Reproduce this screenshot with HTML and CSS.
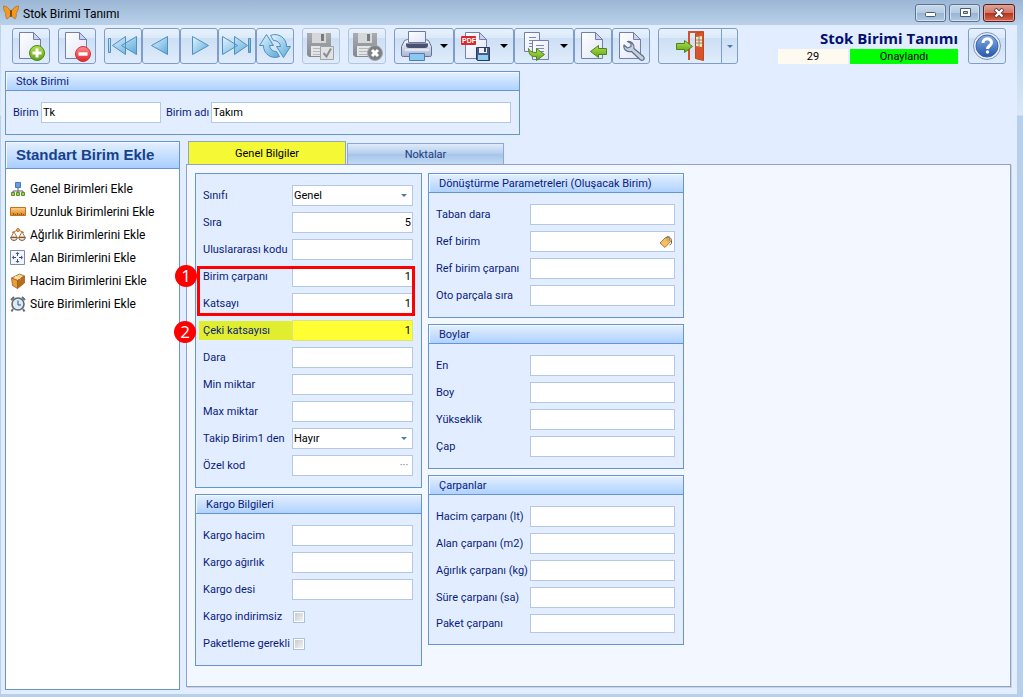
FILE: index.html
```
<!DOCTYPE html>
<html lang="tr">
<head>
    <meta charset="UTF-8">
    <meta name="viewport" content="width=device-width, initial-scale=1.0">
    <title>Stok Birimi Tanımı</title>
    <link rel="stylesheet" href="styles.css">
</head>
<body>

    <!-- Shared gradients and shapes for the icons -->
    <svg class="defs" width="0" height="0" aria-hidden="true">
        <defs>
            <linearGradient id="gBlue" x1="0" y1="0" x2="1" y2="1"><stop offset="0" stop-color="#e3f5fd"/><stop offset="1" stop-color="#5ba9db"/></linearGradient>
            <linearGradient id="gGreen" x1="0" y1="0" x2="0" y2="1"><stop offset="0" stop-color="#b5e04c"/><stop offset="1" stop-color="#5fa31c"/></linearGradient>
            <linearGradient id="gRed" x1="0" y1="0" x2="0" y2="1"><stop offset="0" stop-color="#ff8d8d"/><stop offset="1" stop-color="#e02228"/></linearGradient>
            <linearGradient id="gPage" x1="0" y1="0" x2="1" y2="1"><stop offset="0" stop-color="#ffffff"/><stop offset="1" stop-color="#dfe5f6"/></linearGradient>
            <linearGradient id="gGray" x1="0" y1="0" x2="0" y2="1"><stop offset="0" stop-color="#a9acb1"/><stop offset="1" stop-color="#85888d"/></linearGradient>
            <linearGradient id="gPrinter" x1="0" y1="0" x2="0" y2="1"><stop offset="0" stop-color="#f6f8fd"/><stop offset="1" stop-color="#a9b5d3"/></linearGradient>
            <linearGradient id="gHelp" x1="0" y1="0" x2="0" y2="1"><stop offset="0" stop-color="#86aee6"/><stop offset="1" stop-color="#2558ad"/></linearGradient>
            <linearGradient id="gOrange" x1="0" y1="0" x2="0" y2="1"><stop offset="0" stop-color="#fbd48c"/><stop offset="1" stop-color="#dc8318"/></linearGradient>
            <symbol id="page" viewBox="0 0 32 32">
                <path d="M4.500 2.500h14l7 7v19h-21z" fill="url(#gPage)" stroke="#747eaa"/>
                <path d="M18.500 2.500v7h7z" fill="#c9d2ee" stroke="#747eaa" stroke-linejoin="round"/>
            </symbol>
            <symbol id="floppy" viewBox="0 0 32 32">
                <path d="M2 3h24v24H4l-2-2z" fill="url(#gGray)"/>
                <path d="M7 3h14v10H7z" fill="#d5d7d9"/>
                <path d="M16 4h3v7h-3z" fill="#777a7e"/>
                <path d="M6 16h16v10H6z" fill="#e4e5e6"/>
                <path d="M8 18.500h12M8 21.500h12M8 24.500h12" stroke="#b6b8bb"/>
            </symbol>
        </defs>
    </svg>

    <div class="window">
        <header class="titlebar">
            <svg width="16" height="16" viewBox="0 0 16 16" aria-hidden="true">
                <path d="M8 8C7 4 4 1 .500 1c0 4 1 6 2.500 7-1 2 0 5 1 6 2-1 3.500-3 4-6z" fill="#f59a1c" stroke="#a8620f" stroke-width=".6"/>
                <path d="M8 8c1-4 4-7 7.500-7 0 4-1 6-2.500 7 1 2 0 5-1 6-2-1-3.500-3-4-6z" fill="#f59a1c" stroke="#a8620f" stroke-width=".6"/>
                <path d="M8 5v7" stroke="#4b2a0a" stroke-width="1.200"/>
            </svg>
            <span class="titlebar-text">Stok Birimi Tanımı</span>
            <div class="window-buttons">
                <button type="button" aria-label="Simge durumuna küçült">
                    <svg width="14" height="10" viewBox="0 0 14 10"><rect x="1.500" y="4.500" width="10" height="4" rx="1" fill="#fff" stroke="#4f5a68"/></svg>
                </button>
                <button type="button" aria-label="Ekranı kapla">
                    <svg width="14" height="10" viewBox="0 0 14 10"><path fill-rule="evenodd" d="M2.500.500h10v8h-10zM5.500 3.500v2h4v-2z" fill="#fff" stroke="#4f5a68"/></svg>
                </button>
                <button type="button" class="close" aria-label="Kapat">
                    <svg width="14" height="10" viewBox="0 0 14 10"><path d="M3 1l8 8M11 1L3 9" stroke="#5c3a3a" stroke-width="4"/><path d="M3.500 1.500l7 7M10.500 1.500l-7 7" stroke="#fff" stroke-width="2.400"/></svg>
                </button>
            </div>
        </header>

        <div class="form">
            <div class="toolbar">
                <button type="button" class="tool" aria-label="Yeni">
                    <svg width="32" height="32" viewBox="0 0 32 32"><use href="#page" width="32" height="32"/><circle cx="22" cy="23" r="7.500" fill="url(#gGreen)" stroke="#4c8518"/><path d="M22 18.500v9M17.500 23h9" stroke="#fff" stroke-width="3"/></svg>
                </button>
                <button type="button" class="tool" aria-label="Sil">
                    <svg width="32" height="32" viewBox="0 0 32 32"><use href="#page" width="32" height="32"/><circle cx="22" cy="24" r="7.500" fill="url(#gRed)" stroke="#d0343a"/><path d="M17.500 24h9" stroke="#fff" stroke-width="3.400"/></svg>
                </button>
                <div class="tool-group">
                    <button type="button" class="tool" aria-label="İlk kayıt">
                        <svg width="32" height="32" viewBox="0 0 32 32"><g fill="url(#gBlue)" stroke="#4f8fc0" stroke-linejoin="round"><path d="M1.500 8.500h2v14h-2zM18.500 6.500v18l-13-9zM29.500 6.500v18l-15-9z"/></g></svg>
                    </button>
                    <button type="button" class="tool" aria-label="Önceki kayıt">
                        <svg width="32" height="32" viewBox="0 0 32 32"><path d="M22.500 6.500v18l-16-9z" fill="url(#gBlue)" stroke="#4f8fc0" stroke-linejoin="round"/></svg>
                    </button>
                    <button type="button" class="tool" aria-label="Sonraki kayıt">
                        <svg width="32" height="32" viewBox="0 0 32 32"><path d="M9.500 6.500v18l16-9z" fill="url(#gBlue)" stroke="#4f8fc0" stroke-linejoin="round"/></svg>
                    </button>
                    <button type="button" class="tool" aria-label="Son kayıt">
                        <svg width="32" height="32" viewBox="0 0 32 32"><g fill="url(#gBlue)" stroke="#4f8fc0" stroke-linejoin="round"><path d="M13.500 6.500v18l13-9zM1.500 6.500v18l15-9zM27.500 8.500h2v14h-2z"/></g></svg>
                    </button>
                    <button type="button" class="tool" aria-label="Yenile">
                        <svg width="32" height="32" viewBox="0 0 32 32"><g fill="url(#gBlue)" stroke="#4f8fc0" stroke-linejoin="round"><path d="M4.500 15.500A11.500 11.500 0 0 0 20.500 26.500L17.500 21.500A6.500 6.500 0 0 1 10.500 15.500H14.500L7.500 4.500.500 15.500z"/><path d="M27.500 16.500A11.500 11.500 0 0 0 11.500 5.500L14.500 10.500A6.500 6.500 0 0 1 21.500 16.500H17.500L24.500 27.500 31.500 16.500z"/></g></svg>
                    </button>
                </div>
                <button type="button" class="tool" disabled aria-label="Kaydet">
                    <svg width="32" height="32" viewBox="0 0 32 32"><use href="#floppy" width="32" height="32"/><path d="M15.500 16.500h13v13h-13z" fill="#dfe1e3" stroke="#9fa2a6"/><path d="M18.500 23l3 3.500 4.500-8" fill="none" stroke="#8a8d91" stroke-width="2"/></svg>
                </button>
                <button type="button" class="tool" disabled aria-label="Kaydet ve kapat">
                    <svg width="32" height="32" viewBox="0 0 32 32"><use href="#floppy" width="32" height="32"/><circle cx="24" cy="23" r="7.500" fill="#7d8085" stroke="#a7aaad"/><path d="M21 20l6 6M27 20l-6 6" stroke="#fff" stroke-width="3"/></svg>
                </button>
                <div class="tool-group">
                    <button type="button" class="tool wide" aria-label="Yazdır">
                        <svg width="32" height="32" viewBox="0 0 32 32"><path d="M3.500 10.500l3-1h18l3 1 3 6v9q0 1-2 1h-26q-2 0-2-1v-9z" fill="url(#gPrinter)" stroke="#65709a"/><path d="M7.500 12.500V1.500h17v11z" fill="url(#gPage)" stroke="#6f79a3"/><path d="M5 13h22v2q0 3-3 3H8q-3 0-3-3z" fill="#4a5272"/><path d="M5 13.500h22" stroke="#8891b0"/><path d="M4 20h24" stroke="#fff"/><path d="M8.500 23.500h15v7h-15z" fill="#8cc9f2" stroke="#5b78ae"/></svg>
                        <span class="arrow"></span>
                    </button>
                    <button type="button" class="tool wide" aria-label="PDF kaydet">
                        <svg width="32" height="32" viewBox="0 0 32 32"><use href="#page" width="32" height="32"/><rect x="0" y="6" width="15" height="9" rx="1" fill="#d9292d"/><text x="1" y="13" class="pdf">PDF</text><path d="M15.500 17.500h13v13h-12l-1-1z" fill="#4a5a85" stroke="#2c3962"/><path d="M18 18h8v5h-8z" fill="#eef1fa"/><path d="M23 18h2v4h-2z" fill="#39486f"/><path d="M17 25h10v5H17z" fill="#8ecdf2"/></svg>
                        <span class="arrow"></span>
                    </button>
                    <button type="button" class="tool wide" aria-label="Kopyala">
                        <svg width="32" height="32" viewBox="0 0 32 32"><path d="M3.500 2.500h15v19h-15z" fill="url(#gPage)" stroke="#747eaa"/><path d="M8 7.500h7M8 10.500h5M8 13.500h4M8 16.500h3" stroke="#7d88b3"/><path d="M11.500 10.500h16v19h-16z" fill="url(#gPage)" stroke="#747eaa"/><path d="M15 15.500h8M15 18.500h8M20 21.500h3" stroke="#7d88b3"/><path d="M7.500 18.500c1 3 4 4 8 4v-4l8 6-8 6v-4c-5 1-8-2-8-8z" fill="url(#gGreen)" stroke="#4c8518"/></svg>
                        <span class="arrow"></span>
                    </button>
                    <button type="button" class="tool" aria-label="İçeri al">
                        <svg width="32" height="32" viewBox="0 0 32 32"><use href="#page" width="32" height="32"/><path d="M13.500 21.500l8-6v3h8v6h-8v3z" fill="url(#gGreen)" stroke="#4c8518"/></svg>
                    </button>
                    <button type="button" class="tool" aria-label="Ayarlar">
                        <svg width="32" height="32" viewBox="0 0 32 32"><use href="#page" width="32" height="32"/><path d="M12.500 11.500c3-1 7 2 6.500 7l9.500 8c2 3-1 5-3.500 3l-8.500-8c-4.500 1-8.500-2-7.500-6.500l3.500 3 3.500-1.500v-3z" fill="#c5cfdf" stroke="#5f6f8e" stroke-width="1.200" stroke-linejoin="round"/></svg>
                    </button>
                </div>
                <div class="tool-group">
                    <button type="button" class="tool exit" aria-label="Çıkış">
                        <svg width="32" height="32" viewBox="0 0 32 32"><path d="M15 30V2h14" fill="none" stroke="#d5512a" stroke-width="2"/><path d="M21.500 3.500l8-2v29l-8-2z" fill="#d9532b" stroke="#b84a22"/><path d="M22 7l6-1v11l-6-1z" fill="#f5e6bd"/><path d="M25 6v11M22 10h6M22 13h6" stroke="#7e7256" stroke-width=".8"/><path d="M2.500 13.500h8v-3l8 6-8 6v-3h-8z" fill="url(#gGreen)" stroke="#4c8518"/></svg>
                    </button>
                    <button type="button" class="tool narrow" aria-label="Çıkış seçenekleri"><span class="arrow small"></span></button>
                </div>
                <div class="record">
                    <h1>Stok Birimi Tanımı</h1>
                    <div class="record-status">
                        <span class="record-no">29</span>
                        <span class="record-state">Onaylandı</span>
                    </div>
                </div>
                <button type="button" class="tool" aria-label="Yardım">
                    <svg width="32" height="32" viewBox="0 0 32 32"><circle cx="16" cy="16" r="13.500" fill="#e9eef8" stroke="#7f95be"/><circle cx="16" cy="16" r="11" fill="url(#gHelp)" stroke="#3b65ab"/><path d="M12 13c0-5.500 8.500-5.500 8.500-.500 0 3-4 3.500-4 6.500" fill="none" stroke="#fff" stroke-width="3"/><circle cx="16.500" cy="22" r="1.700" fill="#fff"/></svg>
                </button>
            </div>

            <section class="group unit">
                <h2>Stok Birimi</h2>
                <div class="unit-fields">
                    <label for="birim">Birim</label>
                    <input type="text" id="birim" class="unit-code" value="Tk">
                    <label for="birimAdi">Birim adı</label>
                    <input type="text" id="birimAdi" class="unit-name" value="Takım">
                </div>
            </section>

            <div class="content">
                <nav class="sidebar">
                    <h2>Standart Birim Ekle</h2>
                    <ul>
                        <li><a href="#">
                            <svg width="16" height="16" viewBox="0 0 16 16"><path d="M8 6v4M3 12v-2h10v2M8 10v2" fill="none" stroke="#5d6570"/><path d="M5.500 1.500h5v5h-5z" fill="#5f9fe6" stroke="#4a78b4"/><g fill="#9ad14b" stroke="#5f8f2d"><path d="M1.500 11.500h3v3h-3zM6.500 11.500h3v3h-3zM11.500 11.500h3v3h-3z"/></g></svg>
                            Genel Birimleri Ekle</a></li>
                        <li><a href="#">
                            <svg width="16" height="16" viewBox="0 0 16 16"><path d="M.500 3.500h15v8H.500z" fill="url(#gOrange)" stroke="#c5701c"/><path d="M3.500 11V9M5.500 11v-1M7.500 11V9M9.500 11v-1M11.500 11V9M13.500 11v-1" stroke="#9a5412"/></svg>
                            Uzunluk Birimlerini Ekle</a></li>
                        <li><a href="#">
                            <svg width="16" height="16" viewBox="0 0 16 16"><g fill="none" stroke="#b5763c"><path d="M2 5.500L8 3l6 2.500M4 5L1 10h6zM12 5L9 10h6z"/><circle cx="8" cy="3" r="1.500" fill="#f3b562"/></g><path d="M.500 10.500h7q-.500 3-3.500 3t-3.500-3zM8.500 10.500h7q-.500 3-3.500 3t-3.500-3z" fill="#e9e0d5" stroke="#7d5a3a"/></svg>
                            Ağırlık Birimlerini Ekle</a></li>
                        <li><a href="#">
                            <svg width="16" height="16" viewBox="0 0 16 16"><path d="M.500.500h14v14H.500z" fill="#f4f6fc" stroke="#7c8ab4"/><path d="M7.500 6V3M7.500 9v3M6 7.500H3M9 7.500h3" stroke="#42506f"/><path d="M7.500 2L5.500 4h4zM7.500 13l-2-2h4zM2 7.500l2-2v4zM13 7.500l-2-2v4z" fill="#42506f"/></svg>
                            Alan Birimlerini Ekle</a></li>
                        <li><a href="#">
                            <svg width="16" height="16" viewBox="0 0 16 16" stroke="#9d5f20" stroke-width=".8" stroke-linejoin="round"><path d="M1.500 5l8-4 5 2-7 4.500z" fill="#fbd48c"/><path d="M1.500 5l6 2.500v8l-5-3z" fill="#e9a03c"/><path d="M7.500 7.500l7-4.500v7l-7 5.500z" fill="#b96c1c"/><path d="M5 3.500L10.500 6" stroke="#fff0cc"/></svg>
                            Hacim Birimlerini Ekle</a></li>
                        <li><a href="#">
                            <svg width="16" height="16" viewBox="0 0 16 16"><path d="M3 13l-1.500 2.500M13 13l1.500 2.500M1 4l3-3M15 4l-3-3" stroke="#6a6f77" stroke-width="2"/><circle cx="8" cy="8" r="6" fill="#dcebf6" stroke="#62676f" stroke-width="1.600"/><path d="M8 4.500V9h3" fill="none" stroke="#26518c"/></svg>
                            Süre Birimlerini Ekle</a></li>
                    </ul>
                </nav>

                <main class="tabs">
                    <div class="tab-list" role="tablist">
                        <button type="button" class="tab active" role="tab" aria-selected="true">Genel Bilgiler</button>
                        <button type="button" class="tab" role="tab" aria-selected="false">Noktalar</button>
                    </div>
                    <div class="tab-panel" role="tabpanel">
                        <div class="column column-left">
                            <section class="group general">
                                <div class="fields">
                                    <div class="row"><label for="sinifi">Sınıfı</label><span class="select"><select id="sinifi"><option>Genel</option></select></span></div>
                                    <div class="row"><label for="sira">Sıra</label><input type="text" id="sira" class="number" value="5"></div>
                                    <div class="row"><label for="kod">Uluslararası kodu</label><input type="text" id="kod"></div>
                                    <div class="marked">
                                        <div class="row"><label for="carpan">Birim çarpanı</label><input type="text" id="carpan" class="number" value="1"></div>
                                        <div class="row"><label for="katsayi">Katsayı</label><input type="text" id="katsayi" class="number" value="1"></div>
                                        <span class="badge badge-first">1</span>
                                    </div>
                                    <div class="row highlight"><label for="ceki">Çeki katsayısı</label><input type="text" id="ceki" class="number" value="1"><span class="badge badge-second">2</span></div>
                                    <div class="row"><label for="dara">Dara</label><input type="text" id="dara"></div>
                                    <div class="row"><label for="min">Min miktar</label><input type="text" id="min"></div>
                                    <div class="row"><label for="max">Max miktar</label><input type="text" id="max"></div>
                                    <div class="row"><label for="takip">Takip Birim1 den</label><span class="select"><select id="takip"><option>Hayır</option></select></span></div>
                                    <div class="row"><label for="ozel">Özel kod</label><span class="lookup"><input type="text" id="ozel"><button type="button" aria-label="Özel kod seç">···</button></span></div>
                                </div>
                            </section>
                            <section class="group">
                                <h2>Kargo Bilgileri</h2>
                                <div class="fields">
                                    <div class="row"><label for="hacim">Kargo hacim</label><input type="text" id="hacim"></div>
                                    <div class="row"><label for="agirlik">Kargo ağırlık</label><input type="text" id="agirlik"></div>
                                    <div class="row"><label for="desi">Kargo desi</label><input type="text" id="desi"></div>
                                    <div class="row"><label for="indirimsiz">Kargo indirimsiz</label><input type="checkbox" id="indirimsiz"></div>
                                    <div class="row"><label for="paketleme">Paketleme gerekli</label><input type="checkbox" id="paketleme"></div>
                                </div>
                            </section>
                        </div>

                        <div class="column column-right">
                            <section class="group">
                                <h2>Dönüştürme Parametreleri (Oluşacak Birim)</h2>
                                <div class="fields">
                                    <div class="row"><label for="taban">Taban dara</label><input type="text" id="taban"></div>
                                    <div class="row"><label for="ref">Ref birim</label><span class="lookup"><input type="text" id="ref"><button type="button" aria-label="Ref birim seç">
                                        <svg width="14" height="14" viewBox="0 0 14 14"><path d="M1 8l5-5 4-.500 1.500 4L6 12.500z" fill="#f6bd63" stroke="#b87a35" stroke-linejoin="round"/><path d="M7 3c1-3 6-1 5.500 4 0 2-1 3-2 3" fill="none" stroke="#6b563d"/><circle cx="9" cy="5" r="1" fill="#fff" stroke="#6b563d" stroke-width=".5"/></svg>
                                    </button></span></div>
                                    <div class="row"><label for="refCarpan">Ref birim çarpanı</label><input type="text" id="refCarpan"></div>
                                    <div class="row"><label for="oto">Oto parçala sıra</label><input type="text" id="oto"></div>
                                </div>
                            </section>
                            <section class="group">
                                <h2>Boylar</h2>
                                <div class="fields">
                                    <div class="row"><label for="en">En</label><input type="text" id="en"></div>
                                    <div class="row"><label for="boy">Boy</label><input type="text" id="boy"></div>
                                    <div class="row"><label for="yukseklik">Yükseklik</label><input type="text" id="yukseklik"></div>
                                    <div class="row"><label for="cap">Çap</label><input type="text" id="cap"></div>
                                </div>
                            </section>
                            <section class="group">
                                <h2>Çarpanlar</h2>
                                <div class="fields">
                                    <div class="row"><label for="hacimC">Hacim çarpanı (lt)</label><input type="text" id="hacimC"></div>
                                    <div class="row"><label for="alanC">Alan çarpanı (m2)</label><input type="text" id="alanC"></div>
                                    <div class="row"><label for="agirlikC">Ağırlık çarpanı (kg)</label><input type="text" id="agirlikC"></div>
                                    <div class="row"><label for="sureC">Süre çarpanı (sa)</label><input type="text" id="sureC"></div>
                                    <div class="row short"><label for="paketC">Paket çarpanı</label><input type="text" id="paketC"></div>
                                </div>
                            </section>
                        </div>
                    </div>
                </main>
            </div>
        </div>
    </div>

</body>
</html>
```
FILE: styles.css
```
* {
    box-sizing: border-box;
}
body {
    margin: 0;
    font-family: Roboto, sans-serif;
    font-size: 11px;
    line-height: 14px;
    color: #0b1c7c;
}
h1, h2, ul {
    margin: 0;
    padding: 0;
}
button, input, select {
    font: inherit;
    color: #000;
    margin: 0;
}
svg {
    display: block;
    flex: none;
}
.defs {
    position: absolute;
}

/* Window frame */
.window {
    display: flex;
    flex-direction: column;
    min-height: 100vh;
    padding: 0 6px 3px 1px;
    background: linear-gradient(#9bb6d4, #b9d1ea 25px, #dbe8f6 115px, #b7cfe8 116px);
}
.titlebar {
    display: flex;
    align-items: center;
    height: 25px;
    padding-left: 2px;
}
.titlebar-text {
    flex: 1;
    margin-left: 4px;
    padding-top: 2px;
    font-size: 12px;
    color: #000;
}
.window-buttons {
    display: flex;
    gap: 3px;
    margin-right: 2px;
}
.window-buttons button {
    display: flex;
    align-items: center;
    justify-content: center;
    width: 31px;
    height: 18px;
    padding: 0;
    border: 1px solid #5d7390;
    border-radius: 3px;
    background: linear-gradient(#c9d9eb, #b4cae2 50%, #98b4d2 51%, #b1c9e3);
    box-shadow: inset 0 0 0 1px #d3e1f0;
}
.window-buttons .close {
    width: 32px;
    border-color: #5e1a1a;
    background: linear-gradient(#e0a196, #cf7768 50%, #b8311b 51%, #cf6a50);
    box-shadow: inset 0 0 0 1px #dfa498;
}
.form {
    display: flex;
    flex: 1;
    flex-direction: column;
    gap: 6px;
    padding: 3px 6px 4px 4px;
    background: #e2eeff;
}

/* Toolbar */
.toolbar {
    display: flex;
    gap: 8px;
    padding: 0 5px 1px 7px;
}
.tool-group {
    display: flex;
}
.tool {
    display: flex;
    align-items: center;
    justify-content: center;
    width: 38px;
    height: 36px;
    padding: 0;
    border: 1px solid #7f9dc8;
    border-radius: 3px;
    background: linear-gradient(#e9f2fd, #dbe9f9 27%, #cddff4 28%, #dfecfb);
}
.tool:disabled {
    border-color: #b3c5dd;
}
.wide {
    justify-content: flex-start;
    gap: 7px;
    width: 60px;
    padding-left: 6px;
}
.exit {
    width: 64px;
    border-radius: 3px 0 0 3px;
}
.narrow {
    width: 17px;
    margin-left: -1px;
    border-radius: 0 3px 3px 0;
}
.arrow {
    border: 4px solid transparent;
    border-top-color: #000;
    border-bottom: 0;
}
.arrow.small {
    border-width: 3px 3px 0;
    border-top-color: #4f79ad;
}
.pdf {
    font: bold 7px "Liberation Sans", sans-serif;
    fill: #fff;
}
.record {
    margin-left: auto;
    margin-right: 2px;
    color: #000;
}
.record h1 {
    font: bold 15px/21px "Open Sans", sans-serif;
    color: #04106e;
    text-align: right;
}
.record-status {
    display: flex;
    gap: 2px;
    text-align: center;
    line-height: 15px;
}
.record-no {
    width: 70px;
    background: #fffaf0;
}
.record-state {
    width: 108px;
    background: #00ff00;
}

/* Group boxes */
.group {
    border: 1px solid #6795d3;
    background: #e2eeff;
}
.group h2 {
    height: 19px;
    padding-left: 10px;
    border-bottom: 1px solid #6795d3;
    background: linear-gradient(#e4f0ff, #afd2ff);
    box-shadow: inset 1px 1px 0 #f4f9ff;
    font-size: 11px;
    font-weight: normal;
    line-height: 19px;
}
input[type="text"], select {
    width: 100%;
    min-width: 0;
    height: 21px;
    padding: 0 1px;
    border: 1px solid #b3c8e4;
    border-radius: 0;
    background: #fff;
}
.unit {
    width: 515px;
}
.unit-fields {
    display: flex;
    align-items: center;
    padding: 11px 8px 11px 7px;
}
.unit-fields label {
    flex: none;
    width: 28px;
}
.unit-fields .unit-code {
    width: 120px;
    margin-right: 5px;
}
.unit-fields .unit-code + label {
    width: 45px;
}
.unit-fields .unit-name {
    flex: 1;
}

/* Sidebar */
.content {
    display: flex;
    flex: 1;
    gap: 6px;
}
.sidebar {
    flex: none;
    width: 175px;
    border: 1px solid #6795d3;
    background: #fff;
}
.sidebar h2 {
    padding-left: 10px;
    border-bottom: 1px solid #6795d3;
    background: linear-gradient(#e4f0ff, #a9ceff);
    box-shadow: inset 1px 1px 0 #f4f9ff;
    font: bold 15px/26px "Liberation Sans", sans-serif;
    color: #17428b;
}
.sidebar ul {
    padding: 8px 4px;
    list-style: none;
}
.sidebar a {
    display: flex;
    align-items: center;
    gap: 4px;
    height: 23px;
    font-size: 12px;
    color: #000;
    text-decoration: none;
    white-space: nowrap;
}

/* Tabs */
.tabs {
    display: flex;
    flex: 1;
    flex-direction: column;
    padding-bottom: 3px;
}
.tab-list {
    display: flex;
    align-items: flex-end;
    gap: 1px;
    height: 23px;
    padding-left: 2px;
}
.tab {
    width: 157px;
    height: 21px;
    padding: 2px 0 0;
    border: 1px solid #8fa8d2;
    border-bottom: 0;
    background: linear-gradient(#dfebfa, #b3cdee 50%, #a6c4ea 51%, #c2d9f5);
    color: #1e3c7a;
}
.tab.active {
    width: 158px;
    height: 23px;
    border-color: #93a5c0;
    background: #f4f835;
    color: #000;
}
.tab-panel {
    display: flex;
    flex: 1;
    align-items: flex-start;
    gap: 6px;
    padding: 8px;
    border: 1px solid #8fa3c8;
    background: #f3f7ff;
    box-shadow: 1px 1px 0 #c3d3ea;
}
.column {
    display: flex;
    flex-direction: column;
    gap: 6px;
}
.column-left {
    width: 227px;
}
.column-right {
    width: 256px;
}

/* Field rows */
.fields {
    display: flex;
    flex-direction: column;
    gap: 6px;
    padding: 11px 8px 11px 3px;
}
.row {
    display: grid;
    grid-template-columns: 93px 1fr;
    align-items: center;
    min-height: 21px;
}
.row label {
    padding-left: 4px;
    white-space: nowrap;
}
.column-right .row {
    grid-template-columns: 98px 1fr;
}
.row.short {
    min-height: 19px;
}
.row.short input {
    height: 19px;
}
.row .number {
    text-align: right;
}
.select, .lookup {
    position: relative;
    display: flex;
}
select {
    appearance: none;
}
.select::after {
    content: "";
    position: absolute;
    top: 9px;
    right: 6px;
    border: 3px solid transparent;
    border-top-color: #4f79ad;
    border-bottom: 0;
    pointer-events: none;
}
.lookup button {
    position: absolute;
    top: 1px;
    right: 1px;
    display: flex;
    align-items: center;
    justify-content: center;
    width: 16px;
    height: 19px;
    padding: 0;
    border: 0;
    background: none;
    color: #5c7185;
}
input[type="checkbox"] {
    appearance: none;
    width: 12px;
    height: 12px;
    margin-left: 1px;
    border: 1px solid #a9c0e0;
    background: linear-gradient(135deg, #c3c6cb, #f6f6f6);
    box-shadow: inset 0 0 0 1px #fff;
}

/* Marked fields */
.marked {
    position: relative;
    display: flex;
    flex-direction: column;
    gap: 6px;
}
.marked::after {
    content: "";
    position: absolute;
    inset: 0 -2px -2px -2px;
    border: 3px solid #fe0000;
    pointer-events: none;
}
.highlight {
    position: relative;
}
.highlight label {
    line-height: 19px;
    background: #e1ee30;
}
.highlight input[type="text"] {
    border-color: #d9e285;
    background: #ffff33;
}
.badge {
    position: absolute;
    z-index: 1;
    width: 22px;
    height: 22px;
    border-radius: 50%;
    background: #fe0000;
    font: 17px/22px "Open Sans", sans-serif;
    color: #fff;
    text-align: center;
}
.badge-first {
    top: -1px;
    left: -24px;
}
.badge-second {
    top: 1px;
    left: -25px;
}
```
